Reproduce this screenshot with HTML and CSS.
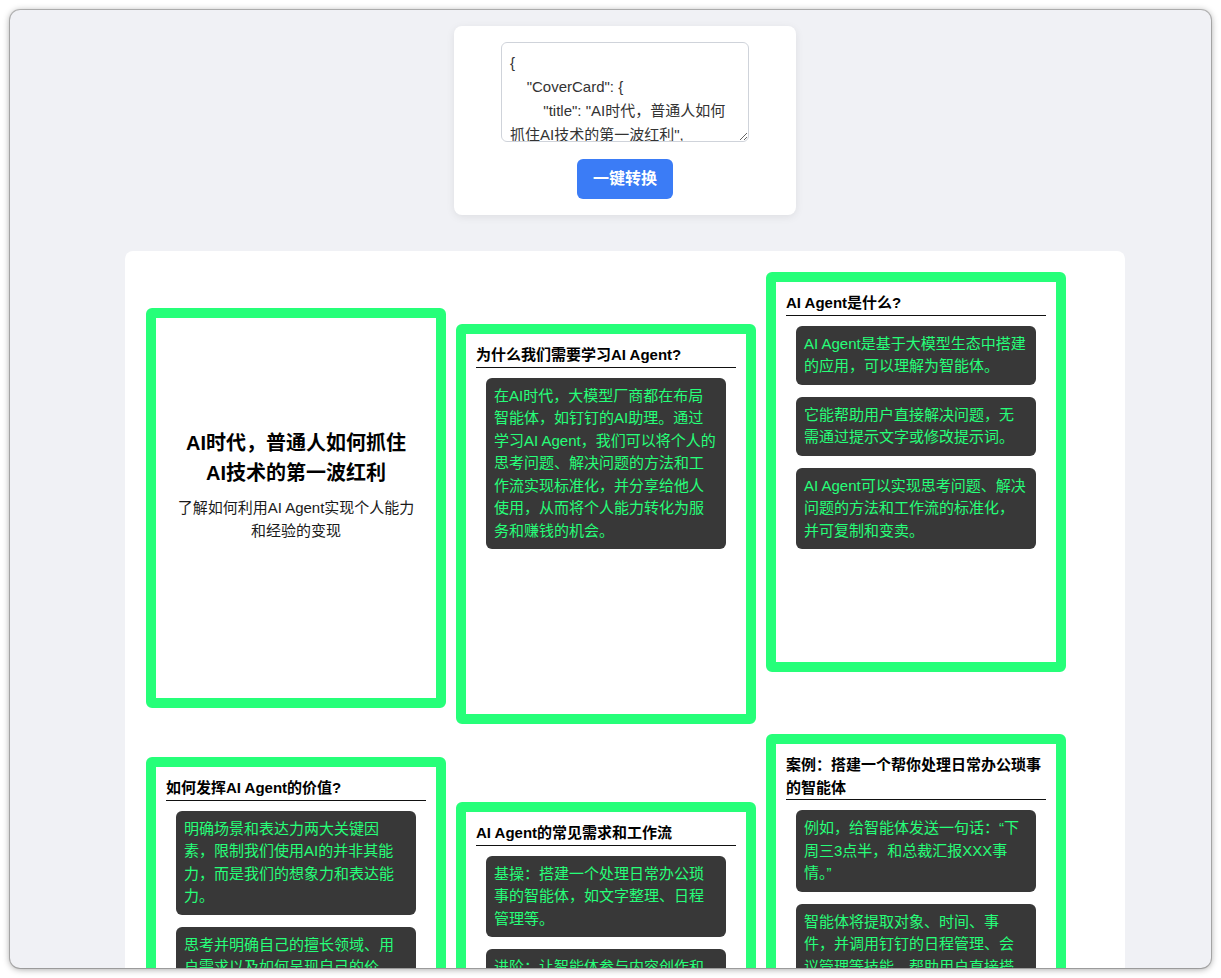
FILE: index.html
```html
<!DOCTYPE html>
<html lang="zh-CN">
<head>
<meta charset="utf-8">
<title>一键转换</title>
<link rel="stylesheet" href="styles.css">
</head>
<body>
<div class="window">
  <div class="page">
    <section class="input-card">
      <textarea class="json-input" spellcheck="false">{
    "CoverCard": {
        "title": "AI时代，普通人如何抓住AI技术的第一波红利",
        "subtitle": "了解如何利用AI Agent实现个人能力和经验的变现"
    }
}</textarea>
      <button class="convert-btn" type="button">一键转换</button>
    </section>

    <section class="board">
      <div class="grid">
        <article class="card cover off-36">
          <h1 class="cover-title">AI时代，普通人如何抓住AI技术的第一波红利</h1>
          <p class="cover-sub">了解如何利用AI Agent实现个人能力和经验的变现</p>
        </article>

        <article class="card off-52">
          <h3 class="card-title">为什么我们需要学习AI Agent?</h3>
          <p class="point">在AI时代，大模型厂商都在布局智能体，如钉钉的AI助理。通过学习AI Agent，我们可以将个人的思考问题、解决问题的方法和工作流实现标准化，并分享给他人使用，从而将个人能力转化为服务和赚钱的机会。</p>
        </article>

        <article class="card off-0">
          <h3 class="card-title">AI Agent是什么?</h3>
          <p class="point">AI Agent是基于大模型生态中搭建的应用，可以理解为智能体。</p>
          <p class="point">它能帮助用户直接解决问题，无需通过提示文字或修改提示词。</p>
          <p class="point">AI Agent可以实现思考问题、解决问题的方法和工作流的标准化，<br>并可复制和变卖。</p>
        </article>

        <article class="card off-23">
          <h3 class="card-title">如何发挥AI Agent的价值?</h3>
          <p class="point">明确场景和表达力两大关键因素，限制我们使用AI的并非其能力，而是我们的想象力和表达能力。</p>
          <p class="point">思考并明确自己的擅长领域、用户需求以及如何呈现自己的价值。</p>
        </article>

        <article class="card off-68">
          <h3 class="card-title">AI Agent的常见需求和工作流</h3>
          <p class="point">基操：搭建一个处理日常办公琐事的智能体，如文字整理、日程管理等。</p>
          <p class="point">进阶：让智能体参与内容创作和知识管理，提升工作效率。</p>
        </article>

        <article class="card off-0">
          <h3 class="card-title">案例：搭建一个帮你处理日常办公琐事的智能体</h3>
          <p class="point">例如，给智能体发送一句话：“下周三3点半，和总裁汇报XXX事情。”</p>
          <p class="point">智能体将提取对象、时间、事件，并调用钉钉的日程管理、会议管理等技能，帮助用户直接搭建日程安排。</p>
        </article>
      </div>
    </section>
  </div>
</div>
</body>
</html>
```

FILE: styles.css
```css
* {
  box-sizing: border-box;
}

html, body {
  margin: 0;
  padding: 0;
  background: #ffffff;
}

body {
  font-family: "Liberation Sans", "Noto Sans CJK SC", sans-serif;
  color: #000;
}

.window {
  margin: 10px;
  width: 1201px;
  height: 958px;
  border-radius: 10px;
  overflow: hidden;
  background: #f0f1f5;
  box-shadow: 0 0 0 1px rgba(0, 0, 0, 0.22), 0 1px 7px rgba(0, 0, 0, 0.4);
}

.page {
  display: flex;
  flex-direction: column;
  align-items: center;
  padding: 16px 0 0 29px;
}

.input-card {
  width: 342px;
  background: #ffffff;
  border-radius: 8px;
  box-shadow: 0 2px 8px rgba(0, 0, 0, 0.08);
  padding: 16px 47px;
  display: flex;
  flex-direction: column;
  align-items: center;
  gap: 17px;
}

.json-input {
  display: block;
  width: 248px;
  height: 100px;
  padding: 8px 9px 8px 8px;
  border: 1px solid #cfd3da;
  border-radius: 6px;
  font-family: "Liberation Sans", "Noto Sans CJK SC", sans-serif;
  font-size: 15px;
  line-height: 24px;
  color: #333333;
  overflow: hidden;
  resize: both;
  background: #fff;
  margin: 0;
}

.convert-btn {
  width: 96px;
  height: 40px;
  border: none;
  border-radius: 6px;
  background: #3b7cf6;
  color: #ffffff;
  font-family: "Liberation Sans", "Noto Sans CJK SC", sans-serif;
  font-size: 16px;
  font-weight: 700;
  line-height: 24px;
  padding: 0;
}

.board {
  margin-top: 36px;
  width: 1000px;
  background: #ffffff;
  border-radius: 8px;
  padding: 21px 21px 40px;
}

.grid {
  display: grid;
  grid-template-columns: repeat(3, 300px);
  column-gap: 10px;
  row-gap: 10px;
  align-items: start;
}

.card {
  height: 400px;
  border: 10px solid #26ff79;
  border-radius: 6px;
  background: #ffffff;
  padding: 10px 10px;
  overflow: hidden;
}

.off-0 { margin-top: 0; }
.off-23 { margin-top: 23px; }
.off-36 { margin-top: 36px; }
.off-52 { margin-top: 52px; }
.off-68 { margin-top: 68px; }

.cover {
  display: flex;
  flex-direction: column;
  justify-content: center;
  align-items: center;
  text-align: center;
  padding: 0 20px 46px;
}

.cover-title {
  margin: 0;
  max-width: 226px;
  font-size: 20px;
  font-weight: 700;
  line-height: 30px;
  color: #000;
}

.cover-sub {
  margin: 8px 0 0;
  font-size: 15px;
  line-height: 23px;
  color: #1a1a1a;
}

.card-title {
  margin: 0;
  font-size: 15px;
  font-weight: 700;
  line-height: 22.5px;
  color: #000;
  border-bottom: 1px solid #111;
}

.point {
  margin: 10px 10px 0;
  padding: 7px 8px;
  background: #383838;
  border-radius: 6px;
  color: #26ff79;
  font-size: 15px;
  line-height: 22.5px;
}

.point + .point {
  margin-top: 12px;
}
```
